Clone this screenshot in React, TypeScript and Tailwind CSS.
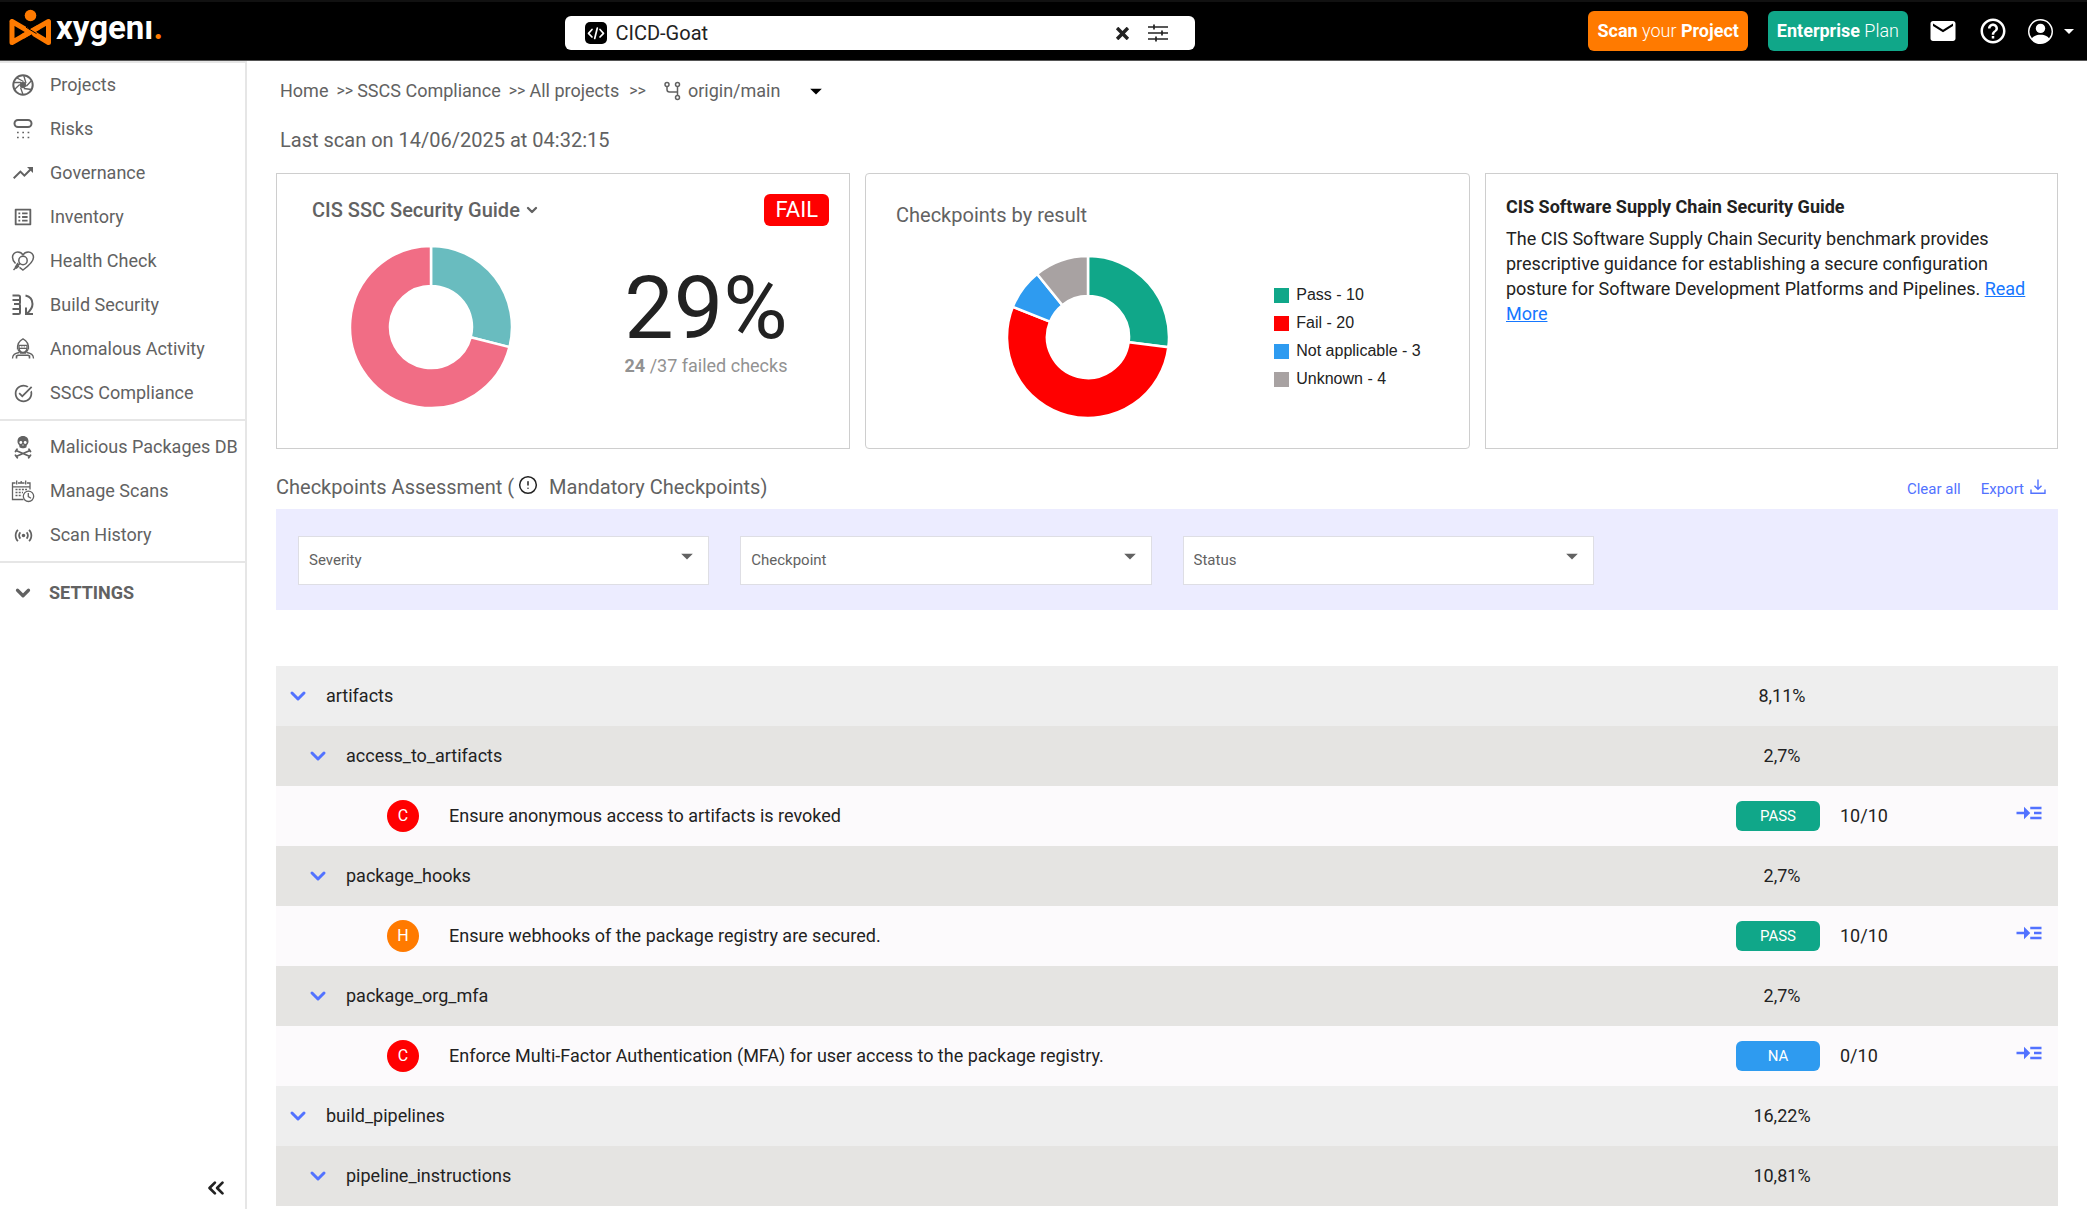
import React from "react";
import { ChevronDown, ChevronsLeft, CircleAlert } from "lucide-react";
import {
  MdArrowDropDown,
  MdEmail,
  MdHelpOutline,
  MdOutlineListAlt,
  MdReadMore,
  MdSensors,
  MdTaskAlt,
  MdTrendingUp,
} from "react-icons/md";
import { BsPersonCircle } from "react-icons/bs";
import { FaSkullCrossbones } from "react-icons/fa6";
import { ImCross } from "react-icons/im";

/* ---------- icons ---------- */

const LogoMark = () => (
  <svg width="43" height="37" viewBox="0 0 43 37" fill="none" aria-hidden="true">
    <circle cx="21.5" cy="6.5" r="5.8" fill="#ff7a00" />
    <path
      d="M3 12.5v21L39.500 12.500v21L25.500 25M3 12.500L17.500 21"
      stroke="#ff7a00"
      strokeWidth="5"
      strokeLinejoin="round"
      strokeLinecap="round"
    />
    <path d="M13.500 27.500L29.500 18.300" stroke="#ff7a00" strokeWidth="5" />
    <path d="M17 18.200L27.500 24.600" stroke="#000" strokeWidth="1" />
  </svg>
);

const ApertureIcon = () => (
  <svg width="24" height="24" viewBox="0 0 24 24" fill="none" stroke="currentColor" aria-hidden="true">
    <circle cx="12" cy="12" r="9.700" strokeWidth="2" />
    <circle cx="12" cy="12" r="2.800" fill="currentColor" strokeWidth="1" />
    <path
      d="M12.500 8.500L6 5M15 10.300L12.800 2.800M15.300 13.200L20.600 7.500M12.800 15.500L20.500 16.500M9.500 14.500L12 21.500M8.700 11.500L3.500 16.500M10 9.500L2.600 9.500"
      strokeWidth="1.300"
    />
  </svg>
);

const RisksIcon = () => (
  <svg width="24" height="24" viewBox="0 0 24 24" fill="none" stroke="currentColor" aria-hidden="true">
    <rect x="3.500" y="3" width="17" height="7" rx="3.500" strokeWidth="2" />
    <path d="M6 15.500h12.500M6 20.500h12.500" strokeWidth="1.700" strokeDasharray="1.700 3.600" />
  </svg>
);

const TrendIcon = () => <MdTrendingUp size={24} />;

const HealthIcon = () => (
  <svg width="24" height="24" viewBox="0 0 24 24" fill="none" stroke="currentColor" strokeWidth="1.500" aria-hidden="true">
    <path d="M4.500 14.500C2.500 12.500 1.500 10.500 1.500 8.300C1.500 5.200 3.900 3 6.700 3C9 3 11 4.200 12 6C13 4.200 15 3 17.300 3C20.100 3 22.500 5.200 22.500 8.300C22.500 13 17.500 17 12 21L8.500 18.400" />
    <circle cx="12" cy="11.500" r="4.200" />
    <path d="M9 14.500L2.500 21M7 14L4 19M8 17L5 19.500" />
  </svg>
);

const BuildIcon = () => (
  <svg width="24" height="24" viewBox="0 0 24 24" fill="none" stroke="currentColor" strokeWidth="2" aria-hidden="true">
    <path d="M1.500 2.500H7.500Q9 2.500 9 4V9.500Q9 11 7.500 11H3M7.500 11Q9 11 9 12.500V19.500Q9 21 7.500 21H1.500M1.500 7H8.500M1.500 16H8.500" />
    <path d="M14.500 2.500C19 3.500 21.500 6.500 21.500 11C21.500 15 19.500 17.500 16 20.500" />
    <path d="M15 14.500V21H22" />
  </svg>
);

const AnomalyIcon = () => (
  <svg width="24" height="24" viewBox="0 0 24 24" fill="none" stroke="currentColor" strokeWidth="1.300" aria-hidden="true">
    <path d="M6.500 12.500C6 6 8.500 3.500 12 1.800C15.500 3.500 18 6 17.500 12.500" />
    <path d="M8 8.300H16V11.300H8Z" />
    <path d="M8 11.500C8.500 14 10 15.500 12 15.500C14 15.500 15.500 14 16 11.500" />
    <path d="M7 12.500L9.500 16H14.500L17 12.500" />
    <path d="M1.500 21.500C1.500 17.500 4 16.500 8 15.500M22.500 21.500C22.500 17.500 20 16.500 16 15.500" />
    <path d="M5.500 21.500V19L7 18.200H17L18.500 19V21.500" strokeWidth="1.600" />
    <path d="M10.500 9.800h.8M12.800 9.800h.8" />
  </svg>
);

const ManageScansIcon = () => (
  <svg width="24" height="24" viewBox="0 0 24 24" fill="none" stroke="currentColor" strokeWidth="1.300" aria-hidden="true">
    <path d="M12.500 20.500H1.500V4H4.500M7 4H13.500M16 4H19V10.500M1.500 7.800H19" />
    <path d="M5.700 1.500V5.500M14.700 1.500V5.500M10.200 2V4" />
    <path d="M4.500 10.500H16M4.500 13.500H12M4.500 16.500H11" strokeWidth="1.600" strokeDasharray="2 1.200" />
    <circle cx="17.500" cy="17.300" r="5.200" />
    <path d="M17.300 14V17.600L20 19.200" />
  </svg>
);

const BranchIcon = () => (
  <svg width="18" height="20" viewBox="0 0 18 20" fill="none" stroke="currentColor" strokeWidth="1.500" aria-hidden="true">
    <circle cx="3" cy="3.500" r="2" />
    <circle cx="13.500" cy="3.500" r="2" />
    <circle cx="13.500" cy="16.500" r="2" />
    <path d="M3 5.500V8.500Q3 11 5.500 11H13.500M13.500 5.500V14.500" />
  </svg>
);

const TuneIcon = () => (
  <svg width="22" height="20" viewBox="0 0 22 20" fill="none" stroke="#222" strokeWidth="1.700" aria-hidden="true">
    <path d="M1 4H21M1 10H21M1 16H21M7 1.500V6.500M15 7.500V12.500M9 13.500V18.500" />
  </svg>
);

const CodeIcon = () => (
  <svg width="22" height="22" viewBox="0 0 22 22" fill="none" aria-hidden="true">
    <rect width="22" height="22" rx="5" fill="#000" />
    <path
      d="M7 7.500L3.500 11.300L7 15M15 7.500L18.500 11.300L15 15M12.300 6L9.700 16.500"
      stroke="#fff"
      strokeWidth="1.700"
      strokeLinecap="round"
      strokeLinejoin="round"
    />
  </svg>
);

const ExportIcon = () => (
  <svg width="16" height="16" viewBox="0 0 16 16" fill="none" stroke="currentColor" strokeWidth="1.400" aria-hidden="true">
    <path d="M8 .5V10M4.500 6.800L8 10.300L11.500 6.800M1 10.500V14.300H15V10.500" />
  </svg>
);

/* ---------- donut chart ---------- */

type Slice = { value: number; color: string };

function Donut({ slices, label }: { slices: Slice[]; label: string }) {
  const total = slices.reduce((sum, s) => sum + s.value, 0);
  const point = (r: number, f: number) => {
    const a = f * Math.PI * 2;
    return `${(81 + r * Math.sin(a)).toFixed(2)} ${(81 - r * Math.cos(a)).toFixed(2)}`;
  };
  let acc = 0;
  return (
    <svg width="162" height="162" viewBox="0 0 162 162" role="img" aria-label={label} className="shrink-0">
      {slices.map((s) => {
        const from = acc / total;
        acc += s.value;
        const to = acc / total;
        const large = to - from > 0.5 ? 1 : 0;
        return (
          <path
            key={s.color}
            d={`M${point(81, from)}A81 81 0 ${large} 1 ${point(81, to)}L${point(41, to)}A41 41 0 ${large} 0 ${point(41, from)}Z`}
            fill={s.color}
            stroke="#fff"
            strokeWidth="2.500"
          />
        );
      })}
    </svg>
  );
}

/* ---------- data ---------- */

const mainNav = [
  { label: "Projects", icon: <ApertureIcon /> },
  { label: "Risks", icon: <RisksIcon /> },
  { label: "Governance", icon: <TrendIcon /> },
  { label: "Inventory", icon: <MdOutlineListAlt size={22} /> },
  { label: "Health Check", icon: <HealthIcon /> },
  { label: "Build Security", icon: <BuildIcon /> },
  { label: "Anomalous Activity", icon: <AnomalyIcon /> },
  { label: "SSCS Compliance", icon: <MdTaskAlt size={21} /> },
];

const SkullIcon = () => (
  <svg width="18" height="24" viewBox="0 0 18 24" fill="none" aria-hidden="true">
    <path
      d="M9 1C5.500 1 3.500 3.400 3.500 6.300C3.500 8 4 9 4.800 9.800C5.400 10.400 5.300 11 5.500 12.200C6.500 13 7.700 13.300 9 13.300C10.300 13.300 11.500 13 12.500 12.200C12.700 11 12.600 10.400 13.200 9.800C14 9 14.500 8 14.500 6.300C14.500 3.400 12.500 1 9 1Z"
      fill="currentColor"
    />
    <circle cx="6.800" cy="7.500" r="1.400" fill="#fff" />
    <circle cx="11.200" cy="7.500" r="1.400" fill="#fff" />
    <path d="M9 9L8.200 10.500H9.800Z" fill="#fff" />
    <path d="M2 15.500L16 21.500M16 15.500L2 21.500" stroke="currentColor" strokeWidth="1.800" />
    <path
      d="M1.500 16.500L3 14.300M16.500 16.500L15 14.300M1.500 20.300L3.300 22.800M16.500 20.300L14.700 22.800"
      stroke="currentColor"
      strokeWidth="1.800"
      strokeLinecap="round"
    />
  </svg>
);

const toolsNav = [
  { label: "Malicious Packages DB", icon: <SkullIcon /> },
  { label: "Manage Scans", icon: <ManageScansIcon /> },
  { label: "Scan History", icon: <MdSensors size={21} /> },
];

const results = [
  { label: "Pass", value: 10, color: "#10a789", swatch: "bg-[#10a789]" },
  { label: "Fail", value: 20, color: "#ff0000", swatch: "bg-[#ff0000]" },
  { label: "Not applicable", value: 3, color: "#2e9bf0", swatch: "bg-[#2e9bf0]" },
  { label: "Unknown", value: 4, color: "#a8a2a2", swatch: "bg-[#a8a2a2]" },
];

type Row =
  | { kind: "group"; level: 1 | 2; name: string; percent: string }
  | { kind: "check"; severity: "C" | "H"; name: string; status: "PASS" | "NA"; score: string };

const rows: Row[] = [
  { kind: "group", level: 1, name: "artifacts", percent: "8,11%" },
  { kind: "group", level: 2, name: "access_to_artifacts", percent: "2,7%" },
  { kind: "check", severity: "C", name: "Ensure anonymous access to artifacts is revoked", status: "PASS", score: "10/10" },
  { kind: "group", level: 2, name: "package_hooks", percent: "2,7%" },
  { kind: "check", severity: "H", name: "Ensure webhooks of the package registry are secured.", status: "PASS", score: "10/10" },
  { kind: "group", level: 2, name: "package_org_mfa", percent: "2,7%" },
  {
    kind: "check",
    severity: "C",
    name: "Enforce Multi-Factor Authentication (MFA) for user access to the package registry.",
    status: "NA",
    score: "0/10",
  },
  { kind: "group", level: 1, name: "build_pipelines", percent: "16,22%" },
  { kind: "group", level: 2, name: "pipeline_instructions", percent: "10,81%" },
];

/* ---------- sections ---------- */

function TopBar() {
  return (
    <header className="flex h-[61px] shrink-0 items-center border-t-2 border-b border-t-[#111] border-b-[#555] bg-black">
      <div className="w-[27%] shrink-0 pl-[9px]">
        <a href="#" aria-label="xygeni" className="inline-flex items-center gap-1 pb-1">
          <LogoMark />
          <span className="text-[33px] leading-9 font-bold text-white">
            xygenı<span className="text-[#ff7a00]">.</span>
          </span>
        </a>
      </div>
      <div className="mt-1 ml-[2px] flex h-[34px] w-[630px] min-w-0 items-center rounded-md bg-white pr-[26px] pl-5">
        <CodeIcon />
        <input
          aria-label="Project"
          defaultValue="CICD-Goat"
          className="ml-2 min-w-0 flex-1 bg-transparent text-xl text-[#222] outline-none"
        />
        <button type="button" aria-label="Clear project" className="mr-[18px] text-[#222]">
          <ImCross size={13} />
        </button>
        <button type="button" aria-label="Filter projects">
          <TuneIcon />
        </button>
      </div>
      <div className="ml-auto flex shrink-0 items-center pr-[6px] text-white">
        <button type="button" className="mr-5 h-10 rounded-md bg-[#ff7a00] px-[9px] text-lg font-light">
          <span className="font-bold">Scan</span> your <span className="font-bold">Project</span>
        </button>
        <button type="button" className="mr-5 h-10 rounded-md bg-[#10a789] px-[9px] text-lg font-light">
          <span className="font-bold">Enterprise</span> Plan
        </button>
        <button type="button" aria-label="Messages" className="mr-5">
          <MdEmail size={30} />
        </button>
        <button type="button" aria-label="Help" className="mr-5">
          <MdHelpOutline size={30} />
        </button>
        <button type="button" aria-label="Account" className="flex items-center gap-1">
          <BsPersonCircle size={25} />
          <MdArrowDropDown size={24} />
        </button>
      </div>
    </header>
  );
}

function NavList({ items }: { items: { label: string; icon: React.ReactNode }[] }) {
  return (
    <ul>
      {items.map((item) => (
        <li key={item.label}>
          <a href="#" className="flex h-11 items-center pl-[11px] whitespace-nowrap">
            <span className="mr-[15px] flex w-6 justify-center">{item.icon}</span>
            {item.label}
          </a>
        </li>
      ))}
    </ul>
  );
}

function Sidebar() {
  return (
    <nav className="flex w-[247px] shrink-0 flex-col border-t-2 border-r-2 border-[#e6e6e6] text-lg text-[#626262]">
      <NavList items={mainNav} />
      <div className="mt-1 border-y-2 border-[#e6e6e6] py-1">
        <NavList items={toolsNav} />
      </div>
      <button type="button" className="mt-2 flex h-11 items-center pl-[11px] font-bold">
        <span className="mr-[14px] flex w-6 justify-center">
          <ChevronDown size={22} strokeWidth={3.5} />
        </span>
        SETTINGS
      </button>
      <button type="button" aria-label="Collapse menu" className="mt-auto mr-4 mb-2 self-end text-[#222]">
        <ChevronsLeft size={26} strokeWidth={2.500} />
      </button>
    </nav>
  );
}

function Breadcrumb() {
  return (
    <nav aria-label="Breadcrumb" className="flex h-6 items-center pl-1 text-lg whitespace-nowrap">
      <a href="#">Home</a>
      <span className="mr-1 ml-2 text-base">&gt;&gt;</span>
      <a href="#">SSCS Compliance</a>
      <span className="mr-1 ml-2 text-base">&gt;&gt;</span>
      <a href="#">All projects</a>
      <span className="ml-[10px] text-base">&gt;&gt;</span>
      <button type="button" className="ml-[18px] flex items-center gap-[6px]">
        <BranchIcon />
        origin/main
        <span className="ml-4 text-black">
          <MdArrowDropDown size={28} />
        </span>
      </button>
    </nav>
  );
}

function SummaryCards() {
  return (
    <div className="mt-[19px] grid grid-cols-[574fr_605fr_573fr] gap-[15px]">
      <section className="min-h-[276px] border border-[#cecece]">
        <div className="flex items-center justify-between pt-5 pr-5 pl-[35px]">
          <button type="button" className="flex items-center gap-1 text-xl font-medium">
            CIS SSC Security Guide
            <ChevronDown size={16} strokeWidth={3.5} />
          </button>
          <span className="rounded-md bg-[#ff0000] px-[11px] text-[22px] leading-8 text-white">FAIL</span>
        </div>
        <div className="mt-5 grid grid-cols-[54fr_42fr] pr-[4%]">
          <div className="flex justify-center">
            <Donut
              label="29% of checks passed"
              slices={[
                { value: 29, color: "#69bcbf" },
                { value: 71, color: "#f16d85" },
              ]}
            />
          </div>
          <div className="pt-4 text-center whitespace-nowrap">
            <p className="text-[88px] leading-[92px] text-[#222]">29%</p>
            <p className="text-lg leading-6 text-[#929292]">
              <b>24</b> /37 failed checks
            </p>
          </div>
        </div>
      </section>

      <section className="min-h-[276px] rounded-sm border border-[#cecece]">
        <h2 className="pt-[27px] pl-[30px] text-xl leading-7">Checkpoints by result</h2>
        <div className="mt-[27px] flex items-center justify-between pr-[8%] pl-[141px]">
          <Donut label="Checkpoints by result" slices={results} />
          <ul className="font-['Liberation_Sans',Arial,sans-serif] text-base leading-7 text-[#222]">
            {results.map((r) => (
              <li key={r.label} className="flex h-7 items-center gap-[7px]">
                <span className={`size-[15px] ${r.swatch}`} />
                {r.label} - {r.value}
              </li>
            ))}
          </ul>
        </div>
      </section>

      <section className="min-h-[276px] border border-[#cecece] px-5 pt-5 text-lg leading-[25px] text-[#222]">
        <h2 className="mb-[7px] font-bold">CIS Software Supply Chain Security Guide</h2>
        <p>
          The CIS Software Supply Chain Security benchmark provides prescriptive guidance for establishing a secure
          configuration posture for Software Development Platforms and Pipelines.{" "}
          <a href="#" className="text-[#1677ff] underline">
            Read More
          </a>
        </p>
      </section>
    </div>
  );
}

function Filters() {
  return (
    <form className="grid grid-cols-4 gap-[31px] bg-[#ececff] px-[22px] pt-[27px] pb-[25px]">
      {["Severity", "Checkpoint", "Status"].map((name) => (
        <div key={name} className="relative">
          <select
            aria-label={name}
            className="h-[49px] w-full appearance-none border border-[#dedee4] bg-white pr-10 pl-[10px] text-[15px] text-[#626262]"
          >
            <option>{name}</option>
          </select>
          <MdArrowDropDown size={28} className="pointer-events-none absolute top-[6px] right-2" />
        </div>
      ))}
    </form>
  );
}

function ResultsTable() {
  return (
    <table className="mt-14 w-full table-fixed border-collapse text-lg text-[#222]">
      <colgroup>
        <col />
        <col className="w-[92px]" />
        <col className="w-[120px]" />
        <col className="w-[110px]" />
      </colgroup>
      <tbody>
        {rows.map((row) =>
          row.kind === "group" ? (
            <tr key={row.name} className={row.level === 1 ? "h-[60px] bg-[#eeeeee]" : "h-[60px] bg-[#e5e4e2]"}>
              <td className={row.level === 1 ? "pl-[10px]" : "pl-[30px]"}>
                <button type="button" aria-expanded="true" className="flex items-center gap-4">
                  <ChevronDown size={24} strokeWidth={3} className="text-[#5272ff]" />
                  {row.name}
                </button>
              </td>
              <td className="text-center">{row.percent}</td>
              <td />
              <td />
            </tr>
          ) : (
            <tr key={row.name} className="h-[60px] bg-[#fcfafc]">
              <td className="pl-[111px]">
                <div className="flex items-center gap-[30px]">
                  <span
                    className={
                      row.severity === "C"
                        ? "flex size-8 items-center justify-center rounded-full bg-[#ff0000] text-base text-white"
                        : "flex size-8 items-center justify-center rounded-full bg-[#ff7a00] text-base text-white"
                    }
                  >
                    {row.severity}
                  </span>
                  {row.name}
                </div>
              </td>
              <td>
                <span
                  className={
                    row.status === "PASS"
                      ? "block w-[84px] rounded-md bg-[#10a789] text-center text-[15px] leading-[30px] text-white"
                      : "block w-[84px] rounded-md bg-[#2e9bf0] text-center text-[15px] leading-[30px] text-white"
                  }
                >
                  {row.status}
                </span>
              </td>
              <td className="pl-3">{row.score}</td>
              <td className="pr-[14px]">
                <button type="button" aria-label="Show details" className="mb-[6px] ml-auto block text-[#5272ff]">
                  <MdReadMore size={30} />
                </button>
              </td>
            </tr>
          ),
        )}
      </tbody>
    </table>
  );
}

export default function App() {
  return (
    <div className="flex min-h-screen flex-col bg-white font-[Roboto,sans-serif] text-[#626262]">
      <TopBar />
      <div className="flex flex-1">
        <Sidebar />
        <main className="min-w-0 flex-1 px-[29px] pt-[18px]">
          <Breadcrumb />
          <p className="mt-[23px] pl-1 text-xl leading-7">Last scan on 14/06/2025 at 04:32:15</p>
          <SummaryCards />
          <div className="mt-6 mb-2 flex h-7 items-center justify-between">
            <h2 className="flex items-center text-xl">
              Checkpoints Assessment (
              <CircleAlert size={20} strokeWidth={1.800} className="mr-[11px] mb-1 ml-1 text-[#222]" />
              Mandatory Checkpoints)
            </h2>
            <div className="flex items-center gap-5 pt-1 pr-3 text-[15px] text-[#5272ff]">
              <button type="button">Clear all</button>
              <button type="button" className="flex items-center gap-[6px]">
                Export
                <span className="pb-1">
                  <ExportIcon />
                </span>
              </button>
            </div>
          </div>
          <Filters />
          <ResultsTable />
        </main>
      </div>
    </div>
  );
}
